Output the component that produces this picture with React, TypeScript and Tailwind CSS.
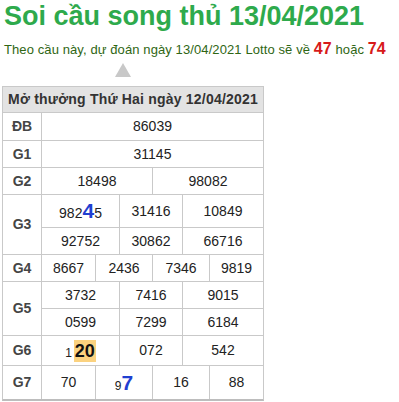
const font = { fontFamily: '"Liberation Sans", Arial, sans-serif' };

type Cell = { w: string; node: React.ReactNode };

const Row = ({ cells, h }: { cells: Cell[]; h: string }) => (
  <div className={`flex ${h}`}>
    {cells.map((c, i) => (
      <div
        key={i}
        className={`${c.w} flex items-center justify-center ${i > 0 ? "border-l border-[#c9c9c9]" : ""}`}
      >
        {c.node}
      </div>
    ))}
  </div>
);

const Prize = ({
  label,
  children,
  last,
}: {
  label: string;
  children: React.ReactNode;
  last?: boolean;
}) => (
  <div className={`flex ${last ? "" : "border-b border-[#c9c9c9]"}`}>
    <div className="w-[39px] border-r border-[#c9c9c9] flex items-center justify-center font-bold text-[#454545]">
      {label}
    </div>
    <div className="flex-1 flex flex-col">{children}</div>
  </div>
);

const three = ["w-[77px]", "w-[63px]", "w-[81px]"];
const four = ["w-[53px]", "w-[57px]", "w-[57px]", "w-[54px]"];

const mk = (ws: string[], vals: React.ReactNode[]): Cell[] =>
  vals.map((v, i) => ({ w: ws[i], node: v }));

export default function App() {
  return (
    <div className="bg-white w-[399px] h-[402px] overflow-hidden" style={font}>
      <h1 className="ml-[4px] text-[27px] leading-[32px] font-bold text-[#2eaa4c]">
        Soi cầu song thủ 13/04/2021
      </h1>
      <p className="ml-[4px] mt-[8px] text-[13px] leading-[18px] tracking-[0.1px] text-[#2f6614] whitespace-nowrap">
        Theo cầu này, dự đoán ngày 13/04/2021 Lotto sẽ về{" "}
        <span className="text-[16px] font-bold text-[#d71a1a]">47</span> hoặc{" "}
        <span className="text-[16px] font-bold text-[#d71a1a]">74</span>
      </p>
      <div className="ml-[115px] mt-[4px] w-0 h-0 border-l-[8px] border-r-[8px] border-b-[14px] border-l-transparent border-r-transparent border-b-[#c8c8c8]" />
      <div className="ml-[2px] mt-[9px] w-[262px] border border-[#c9c9c9] border-b-2 border-b-[#bdbdbd] text-[14px] text-[#222]">
        <div className="h-[26px] bg-[#e3e3e3] border-b border-[#c9c9c9] flex items-center justify-center font-bold tracking-[0.2px] text-[#333]">
          Mở thưởng Thứ Hai ngày 12/04/2021
        </div>
        <Prize label="ĐB">
          <Row h="h-[27px]" cells={[{ w: "w-[221px]", node: "86039" }]} />
        </Prize>
        <Prize label="G1">
          <Row h="h-[26px]" cells={[{ w: "w-[221px]", node: "31145" }]} />
        </Prize>
        <Prize label="G2">
          <Row
            h="h-[26px]"
            cells={mk(["w-[110px]", "w-[111px]"], ["18498", "98082"])}
          />
        </Prize>
        <Prize label="G3">
          <Row
            h="h-[33px] border-b border-[#c9c9c9]"
            cells={mk(three, [
              <span className="flex items-baseline">
                982
                <span className="text-[21px] font-bold text-[#1f3fd1]">4</span>
                5
              </span>,
              "31416",
              "10849",
            ])}
          />
          <Row h="h-[26px]" cells={mk(three, ["92752", "30862", "66716"])} />
        </Prize>
        <Prize label="G4">
          <Row h="h-[26px]" cells={mk(four, ["8667", "2436", "7346", "9819"])} />
        </Prize>
        <Prize label="G5">
          <Row
            h="h-[27px] border-b border-[#c9c9c9]"
            cells={mk(three, ["3732", "7416", "9015"])}
          />
          <Row h="h-[26px]" cells={mk(three, ["0599", "7299", "6184"])} />
        </Prize>
        <Prize label="G6">
          <Row
            h="h-[29px]"
            cells={mk(three, [
              <span className="flex items-baseline">
                <span className="text-[12px] mr-[2px]">1</span>
                <span className="text-[18px] leading-[22px] font-bold text-[#111] bg-[#fbd27f] px-[1px]">
                  20
                </span>
              </span>,
              "072",
              "542",
            ])}
          />
        </Prize>
        <Prize label="G7" last>
          <Row
            h="h-[33px]"
            cells={mk(four, [
              "70",
              <span className="flex items-baseline">
                <span className="text-[12px]">9</span>
                <span className="text-[21px] font-bold text-[#1f3fd1]">7</span>
              </span>,
              "16",
              "88",
            ])}
          />
        </Prize>
      </div>
    </div>
  );
}
